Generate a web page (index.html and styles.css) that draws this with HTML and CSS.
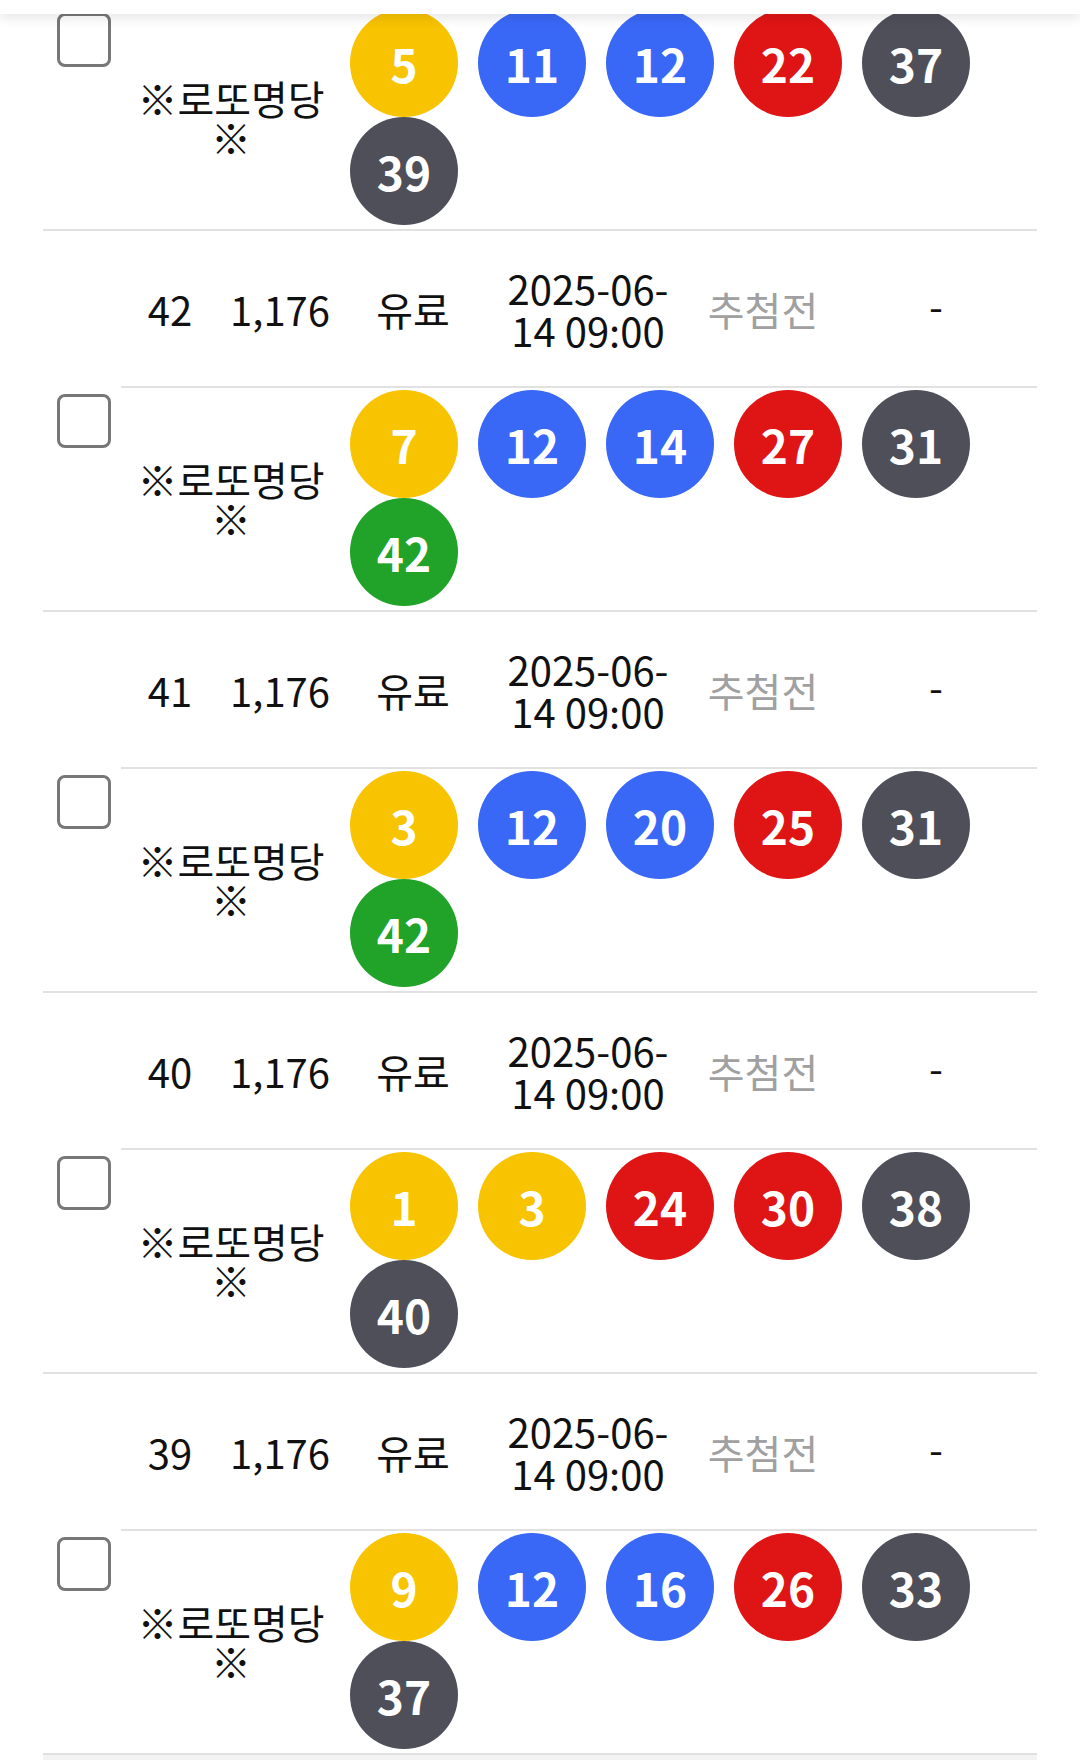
FILE: index.html
```html
<!DOCTYPE html>
<html lang="ko">
<head>
<meta charset="utf-8">
<title>로또 번호 목록</title>
<link rel="stylesheet" href="styles.css">
</head>
<body>
<header class="topbar"></header>
<main class="page">
  <table class="list">
    <colgroup>
      <col class="c-check"><col class="c-no"><col class="c-round"><col class="c-type"><col class="c-date"><col class="c-status"><col class="c-result">
    </colgroup>
    <tbody>
      <tr class="info">
        <td class="check" rowspan="2"><span class="box"></span></td>
        <td>43</td><td>1,176</td><td>유료</td><td>2025-06-<wbr>14 09:00</td><td class="status">추첨전</td><td>-</td>
      </tr>
      <tr class="balls">
        <td class="label" colspan="2">※로또명당 ※</td>
        <td class="nums" colspan="4"><div class="ballset"><span class="ball y">5</span><span class="ball b">11</span><span class="ball b">12</span><span class="ball r">22</span><span class="ball k">37</span><span class="ball k">39</span></div></td>
      </tr>

      <tr class="info">
        <td class="check" rowspan="2"><span class="box"></span></td>
        <td>42</td><td>1,176</td><td>유료</td><td>2025-06-<wbr>14 09:00</td><td class="status">추첨전</td><td>-</td>
      </tr>
      <tr class="balls">
        <td class="label" colspan="2">※로또명당 ※</td>
        <td class="nums" colspan="4"><div class="ballset"><span class="ball y">7</span><span class="ball b">12</span><span class="ball b">14</span><span class="ball r">27</span><span class="ball k">31</span><span class="ball g">42</span></div></td>
      </tr>

      <tr class="info">
        <td class="check" rowspan="2"><span class="box"></span></td>
        <td>41</td><td>1,176</td><td>유료</td><td>2025-06-<wbr>14 09:00</td><td class="status">추첨전</td><td>-</td>
      </tr>
      <tr class="balls">
        <td class="label" colspan="2">※로또명당 ※</td>
        <td class="nums" colspan="4"><div class="ballset"><span class="ball y">3</span><span class="ball b">12</span><span class="ball b">20</span><span class="ball r">25</span><span class="ball k">31</span><span class="ball g">42</span></div></td>
      </tr>

      <tr class="info">
        <td class="check" rowspan="2"><span class="box"></span></td>
        <td>40</td><td>1,176</td><td>유료</td><td>2025-06-<wbr>14 09:00</td><td class="status">추첨전</td><td>-</td>
      </tr>
      <tr class="balls">
        <td class="label" colspan="2">※로또명당 ※</td>
        <td class="nums" colspan="4"><div class="ballset"><span class="ball y">1</span><span class="ball y">3</span><span class="ball r">24</span><span class="ball r">30</span><span class="ball k">38</span><span class="ball k">40</span></div></td>
      </tr>

      <tr class="info">
        <td class="check" rowspan="2"><span class="box"></span></td>
        <td>39</td><td>1,176</td><td>유료</td><td>2025-06-<wbr>14 09:00</td><td class="status">추첨전</td><td>-</td>
      </tr>
      <tr class="balls">
        <td class="label" colspan="2">※로또명당 ※</td>
        <td class="nums" colspan="4"><div class="ballset"><span class="ball y">9</span><span class="ball b">12</span><span class="ball b">16</span><span class="ball r">26</span><span class="ball k">33</span><span class="ball k">37</span></div></td>
      </tr>
    </tbody>
  </table>
  <div class="foot"></div>
</main>
</body>
</html>
```
FILE: styles.css
```css
html, body {
  margin: 0;
  padding: 0;
  background: #ffffff;
}
body {
  font-family: "Noto Sans CJK KR", "Noto Sans", sans-serif;
  color: #111111;
  overflow: hidden;
}
.topbar {
  position: fixed;
  top: 0;
  left: 0;
  right: 0;
  height: 14px;
  background: #ffffff;
  box-shadow: 0 4px 12px rgba(0, 0, 0, 0.10);
  z-index: 10;
}
.page {
  padding: 0 43px;
  margin-top: -150px;
}
.list {
  width: 994px;
  border-collapse: collapse;
  table-layout: fixed;
}
.c-check { width: 78px; }
.c-no { width: 98px; }
.c-round { width: 122px; }
.c-type { width: 144px; }
.c-date { width: 206px; }
.c-status { width: 144px; }
.c-result { width: 202px; }

.list td {
  padding: 0;
  text-align: center;
  vertical-align: middle;
  border-bottom: 2px solid #e1e1e1;
}
.list .info td {
  font-size: 40px;
  line-height: 42px;
  padding: 36px 4px 35px;
}
.list .info td.check {
  padding: 0 0 0 4px;
}
.list td.status {
  color: #a0a0a0;
}
.box {
  display: block;
  width: 48px;
  height: 48px;
  margin: 0 auto;
  border: 3px solid #777777;
  border-radius: 8px;
  background: #ffffff;
}
.list td.label {
  font-size: 40px;
  line-height: 39px;
  padding: 0 4px;
}
.list td.nums {
  padding: 2px 0 4px;
}
.ballset {
  display: flex;
  flex-wrap: wrap;
  column-gap: 20px;
  padding-left: 9px;
}
.ball {
  width: 108px;
  height: 108px;
  border-radius: 50%;
  display: flex;
  align-items: center;
  justify-content: center;
  color: #ffffff;
  font-weight: 700;
  font-size: 46px;
  line-height: 1;
}
.ball.y { background: #f8c300; }
.ball.b { background: #3a68f6; }
.ball.r { background: #df1515; }
.ball.k { background: #4e4f59; }
.ball.g { background: #21a229; }

.foot {
  width: 994px;
  height: 40px;
  background: #f3f3f3;
}
```
